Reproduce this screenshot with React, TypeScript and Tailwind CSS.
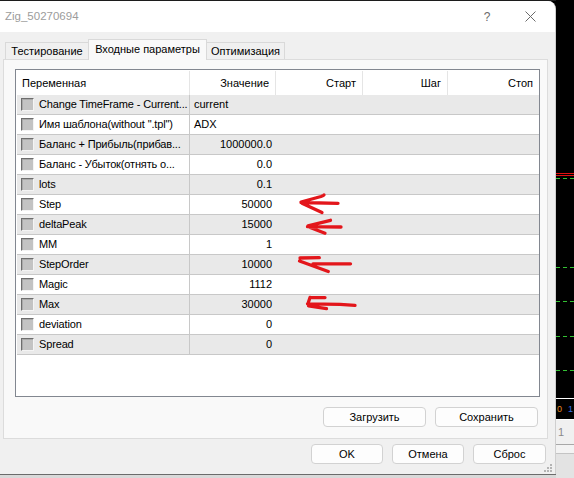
import React from "react";

type Param = { name: string; value: string; left?: boolean };

const params: Param[] = [
  { name: "Change TimeFrame - Current...", value: "current", left: true },
  { name: 'Имя шаблона(without ".tpl")', value: "ADX", left: true },
  { name: "Баланс + Прибыль(прибав...", value: "1000000.0" },
  { name: "Баланс - Убыток(отнять о...", value: "0.0" },
  { name: "lots", value: "0.1" },
  { name: "Step", value: "50000" },
  { name: "deltaPeak", value: "15000" },
  { name: "MM", value: "1" },
  { name: "StepOrder", value: "10000" },
  { name: "Magic", value: "1112" },
  { name: "Max", value: "30000" },
  { name: "deviation", value: "0" },
  { name: "Spread", value: "0" },
];

function Checkbox() {
  return (
    <div className="ml-[4px] w-[13px] h-[13px] shrink-0 border-t border-l border-[#6d6d6d] border-r border-b border-r-[#f4f4f4] border-b-[#f4f4f4] bg-[#c3c3c3]">
      <div className="w-full h-full border-t border-l border-[#a9a9a9]" />
    </div>
  );
}

function Btn({ label, w }: { label: string; w: string }) {
  return (
    <div
      className={`${w} h-[20px] flex items-center justify-center rounded-[4px] border border-[#d2d2d2] bg-[#fdfdfd] text-black`}
    >
      {label}
    </div>
  );
}

function Dashed() {
  return (
    <div className="h-[1px] bg-[repeating-linear-gradient(90deg,#33c233_0px,#33c233_4px,#000_4px,#000_7px)]" />
  );
}

function ChartStrip() {
  return (
    <div className="w-[18px] h-[478px] flex flex-col bg-black">
      <div className="h-[173px]" />
      <div className="h-[1px] bg-[#e01010]" />
      <div className="h-[1px]" />
      <div className="h-[1px] bg-[#e01010]" />
      <div className="h-[2px]" />
      <Dashed />
      <div className="h-[88px]" />
      <Dashed />
      <div className="h-[33px]" />
      <Dashed />
      <div className="h-[34px]" />
      <Dashed />
      <div className="h-[33px]" />
      <Dashed />
      <div className="h-[27px]" />
      <div className="h-[1px] bg-white" />
      <div className="h-[20px] flex items-center justify-between px-[1px] text-[9px] leading-none">
        <span className="text-[#e08a20]">0</span>
        <span className="text-[#3a6fe0]">1</span>
      </div>
      <div className="h-[1px] bg-white" />
      <div className="h-[24px] bg-[#f0f0f0] text-[#8a8a8a] text-[11px] pl-[2px] flex items-center">1</div>
      <div className="h-[1px] bg-[#a8a8a8]" />
      <div className="h-[8px] bg-[#f3f3f3]" />
      <div className="h-[1px] bg-[#c4c4c4]" />
      <div className="flex-1 bg-[#e3e3e3]" />
    </div>
  );
}

function Arrows() {
  return (
    <svg
      className="absolute left-0 top-0 pointer-events-none"
      width={574}
      height={478}
      viewBox="0 0 574 478"
      fill="none"
      stroke="#e3161b"
      strokeWidth={3.3}
      strokeLinecap="round"
      strokeLinejoin="round"
    >
      <path d="M301 202.5 L338 203.3 M301 202 L321 196.5 Q324 195.5 324 195 M302 203.3 L322 212.5" />
      <path d="M307.5 226.7 L341 227 M308 225.8 L330.5 220.3 M309.5 227.3 L325 233.2" />
      <path d="M300 258 L319.3 257.7 M299.5 261 L328.3 271.5 M313 263.8 L350.5 263.8" />
      <path d="M310 297.4 L325 297.6 M307.5 303.8 L340 304.3 L355 305.3 M308.5 305.8 L326.5 308.7 M310 297.4 L308 303.5" />
    </svg>
  );
}

export default function App() {
  return (
    <div className="relative w-[574px] h-[478px] flex overflow-hidden bg-black font-['Liberation_Sans',Arial,sans-serif] text-[11px] text-black">
      <div className="w-[556px] flex flex-col">
        <div className="h-[1px] bg-[#1c1c1c]" />
        <div className="relative h-[473px] flex flex-col bg-[#f0f0f0] rounded-tr-[8px] overflow-hidden border-r border-[#cfcfcf]">
          {/* title bar */}
          <div className="h-[31px] shrink-0 flex items-center bg-white pl-[5px]">
            <span className="text-[#9c9c9c] text-[11.5px]">Zig_50270694</span>
            <div className="ml-auto flex items-center pr-[2px]">
              <div className="w-[40px] text-center text-[#6a6a6a] text-[12px]">?</div>
              <div className="w-[46px] flex justify-center">
                <svg width="11" height="11" viewBox="0 0 11 11" stroke="#6a6a6a" strokeWidth="1">
                  <path d="M0.5 0.5 L10.5 10.5 M10.5 0.5 L0.5 10.5" />
                </svg>
              </div>
            </div>
          </div>

          {/* tabs */}
          <div className="h-[27px] shrink-0 flex items-end pl-[5px]">
            <div className="w-[84px] h-[17px] flex items-center justify-center border border-b-0 border-[#d9d9d9] bg-[#f0f0f0]">
              Тестирование
            </div>
            <div className="relative z-10 -ml-[1px] -mb-[1px] w-[119px] h-[21px] flex items-center justify-center pb-[1px] border border-b-0 border-[#d9d9d9] bg-[#f9f9f9]">
              Входные параметры
            </div>
            <div className="-ml-[1px] w-[79px] h-[17px] flex items-center justify-center border border-b-0 border-[#d9d9d9] bg-[#f0f0f0]">
              Оптимизация
            </div>
          </div>

          {/* panel */}
          <div className="ml-[3px] mr-[7px] h-[380px] shrink-0 border border-[#dcdcdc] bg-[#f9f9f9] pl-[11px] pt-[9px] pr-[8px]">
            <div className="w-[525px] h-[328px] border border-[#828790] bg-white flex flex-col">
              {/* header */}
              <div className="h-[25px] shrink-0 flex pt-[1px]">
                <div className="w-[174px] border-r border-[#e5e5e5] flex items-center pl-[6px]">Переменная</div>
                <div className="w-[86px] border-r border-[#e5e5e5] flex items-center justify-end pr-[6px]">Значение</div>
                <div className="w-[87px] border-r border-[#e5e5e5] flex items-center justify-end pr-[6px]">Старт</div>
                <div className="w-[85px] border-r border-[#e5e5e5] flex items-center justify-end pr-[6px]">Шаг</div>
                <div className="flex-1 flex items-center justify-end pr-[6px]">Стоп</div>
              </div>
              {/* rows */}
              <div className="pl-[1px]">
                {params.map((p, i) => (
                  <div
                    key={p.name}
                    className={`h-[20px] flex border-b border-[#c8c8c8] ${i % 2 === 0 ? "bg-[#e9e9e9]" : "bg-white"}`}
                  >
                    <div className="w-[173px] shrink-0 flex items-center border-r border-[#c8c8c8]">
                      <Checkbox />
                      <span className="ml-[5px] whitespace-nowrap tracking-[-0.15px]">{p.name}</span>
                    </div>
                    <div
                      className={`w-[86px] shrink-0 flex items-center ${p.left ? "justify-start pl-[4px]" : "justify-end pr-[4px]"}`}
                    >
                      {p.value}
                    </div>
                    <div className="flex-1" />
                  </div>
                ))}
              </div>
            </div>
            <div className="mt-[10px] flex justify-end gap-[9px] pr-[1px]">
              <Btn label="Загрузить" w="w-[103px]" />
              <Btn label="Сохранить" w="w-[103px]" />
            </div>
          </div>

          {/* dialog buttons */}
          <div className="mt-[5px] flex justify-end gap-[9px] pr-[9px]">
            <Btn label="OK" w="w-[72px]" />
            <Btn label="Отмена" w="w-[72px]" />
            <Btn label="Сброс" w="w-[73px]" />
          </div>

          {/* resize grip */}
          <svg className="absolute right-[3px] bottom-[2px]" width="8" height="8" viewBox="0 0 8 8" fill="#b4b4b4">
            <rect x="6" y="0" width="2" height="2" />
            <rect x="3" y="3" width="2" height="2" />
            <rect x="6" y="3" width="2" height="2" />
            <rect x="0" y="6" width="2" height="2" />
            <rect x="3" y="6" width="2" height="2" />
            <rect x="6" y="6" width="2" height="2" />
          </svg>
        </div>
        <div className="h-[1px] bg-[#6b6b6b]" />
        <div className="flex-1 bg-[#d9d9d9]" />
      </div>
      <ChartStrip />
      <Arrows />
    </div>
  );
}
